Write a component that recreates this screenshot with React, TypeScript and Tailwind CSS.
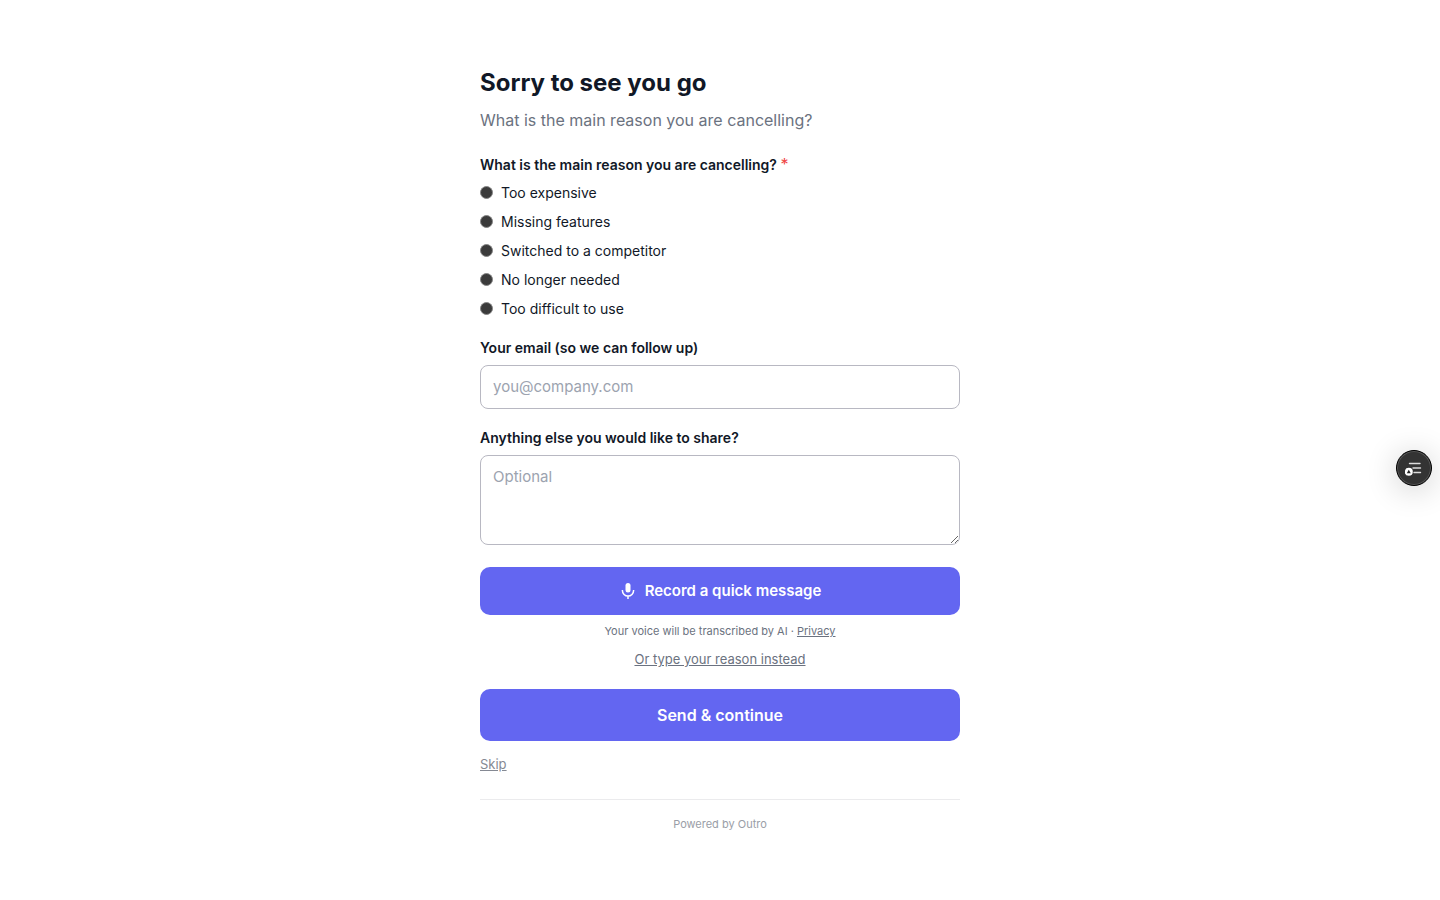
import { useState } from "react";

const reasons = [
  "Too expensive",
  "Missing features",
  "Switched to a competitor",
  "No longer needed",
  "Too difficult to use",
];

const fieldClass =
  "block w-full rounded-lg border border-[#b8b8c2] bg-white px-3 text-[15px] text-[#111827] placeholder:text-[#9ca3af]";

function MicIcon() {
  return (
    <svg width="18" height="18" viewBox="0 0 18 18" aria-hidden="true">
      <rect x="6.5" y="1" width="5" height="9.5" rx="2.5" fill="currentColor" />
      <path d="M3.4 8v.5a5.6 5.6 0 0 0 11.2 0V8M9 14v3" fill="none" stroke="currentColor" strokeWidth="1.5" />
    </svg>
  );
}

function ListIcon() {
  return (
    <svg width="18" height="18" viewBox="0 0 18 18" aria-hidden="true">
      <path d="M4.5 4.5H15M8 9h7.5M9 13.5h6.5" stroke="#dcdcdc" strokeWidth="1.4" strokeLinecap="round" />
      <circle cx="3.8" cy="12.8" r="4" fill="#fff" />
      <path d="M3.8 10.8l2 3.4h-4z" fill="#222" />
    </svg>
  );
}

export default function App() {
  const [reason, setReason] = useState("");
  return (
    <div className="min-h-screen bg-white px-4 pt-[66px] pb-16 font-[Inter,sans-serif] text-[#111827]">
      <main className="mx-auto max-w-[480px]">
        <h1 className="text-2xl leading-[34px] font-bold">Sorry to see you go</h1>
        <p className="mt-2 text-base leading-6 text-[#6b7280]">What is the main reason you are cancelling?</p>

        <form className="mt-[23px]" onSubmit={(e) => e.preventDefault()}>
          <fieldset>
            <legend className="text-sm leading-[18px] font-semibold">
              What is the main reason you are cancelling? <span className="text-base leading-[18px] font-normal text-[#ef4444]">*</span>
            </legend>
            <div className="mt-2 flex flex-col gap-2">
              {reasons.map((r) => (
                <label key={r} className="flex items-center gap-2 text-sm leading-[21px]">
                  <input
                    type="radio"
                    name="reason"
                    value={r}
                    checked={reason === r}
                    onChange={() => setReason(r)}
                    className="size-[13px] shrink-0 appearance-none rounded-full border border-[#858585] bg-[#3b3b3b] checked:bg-[#6366f1]"
                  />
                  {r}
                </label>
              ))}
            </div>
          </fieldset>

          <label htmlFor="email" className="mt-5 mb-2 block text-sm leading-[18px] font-semibold">
            Your email (so we can follow up)
          </label>
          <input id="email" type="email" placeholder="you@company.com" className={`h-11 pb-0.5 ${fieldClass}`} />

          <label htmlFor="comments" className="mt-5 mb-2 block text-sm leading-[18px] font-semibold">
            Anything else you would like to share?
          </label>
          <textarea id="comments" placeholder="Optional" className={`h-[90px] resize-y py-2.5 leading-[22px] ${fieldClass}`} />

          <button type="button" className="mt-[22px] flex h-12 w-full items-center justify-center gap-2 rounded-[10px] bg-[#6366f1] text-[15px] font-semibold text-white">
            <MicIcon />
            Record a quick message
          </button>
          <p className="mt-2 text-center text-[11px] leading-4 text-[#6b7280]">
            Your voice will be transcribed by AI · <a href="#privacy" className="underline">Privacy</a>
          </p>
          <button type="button" className="mx-auto mt-2.5 block text-[13px] leading-5 text-[#6b7280] underline">
            Or type your reason instead
          </button>
          <button type="submit" className="mt-5 block h-[52px] w-full rounded-[10px] bg-[#6366f1] text-base font-semibold text-white">
            Send &amp; continue
          </button>
          <button type="button" className="mt-3 block text-[13px] leading-[22px] text-[#858993] underline">
            Skip
          </button>
        </form>

        <footer className="mt-6 border-t border-[#ebebed] pt-4 text-center text-[11px] leading-4 text-[#9a9ea7]">
          Powered by Outro
        </footer>
      </main>

      <button
        type="button"
        aria-label="Open list"
        className="fixed top-1/2 right-2 flex size-9 items-center justify-center rounded-full border border-black bg-[#333] shadow-[0_4px_32px_rgba(0,0,0,0.2)] inset-ring inset-ring-[#555]"
      >
        <ListIcon />
      </button>
    </div>
  );
}
